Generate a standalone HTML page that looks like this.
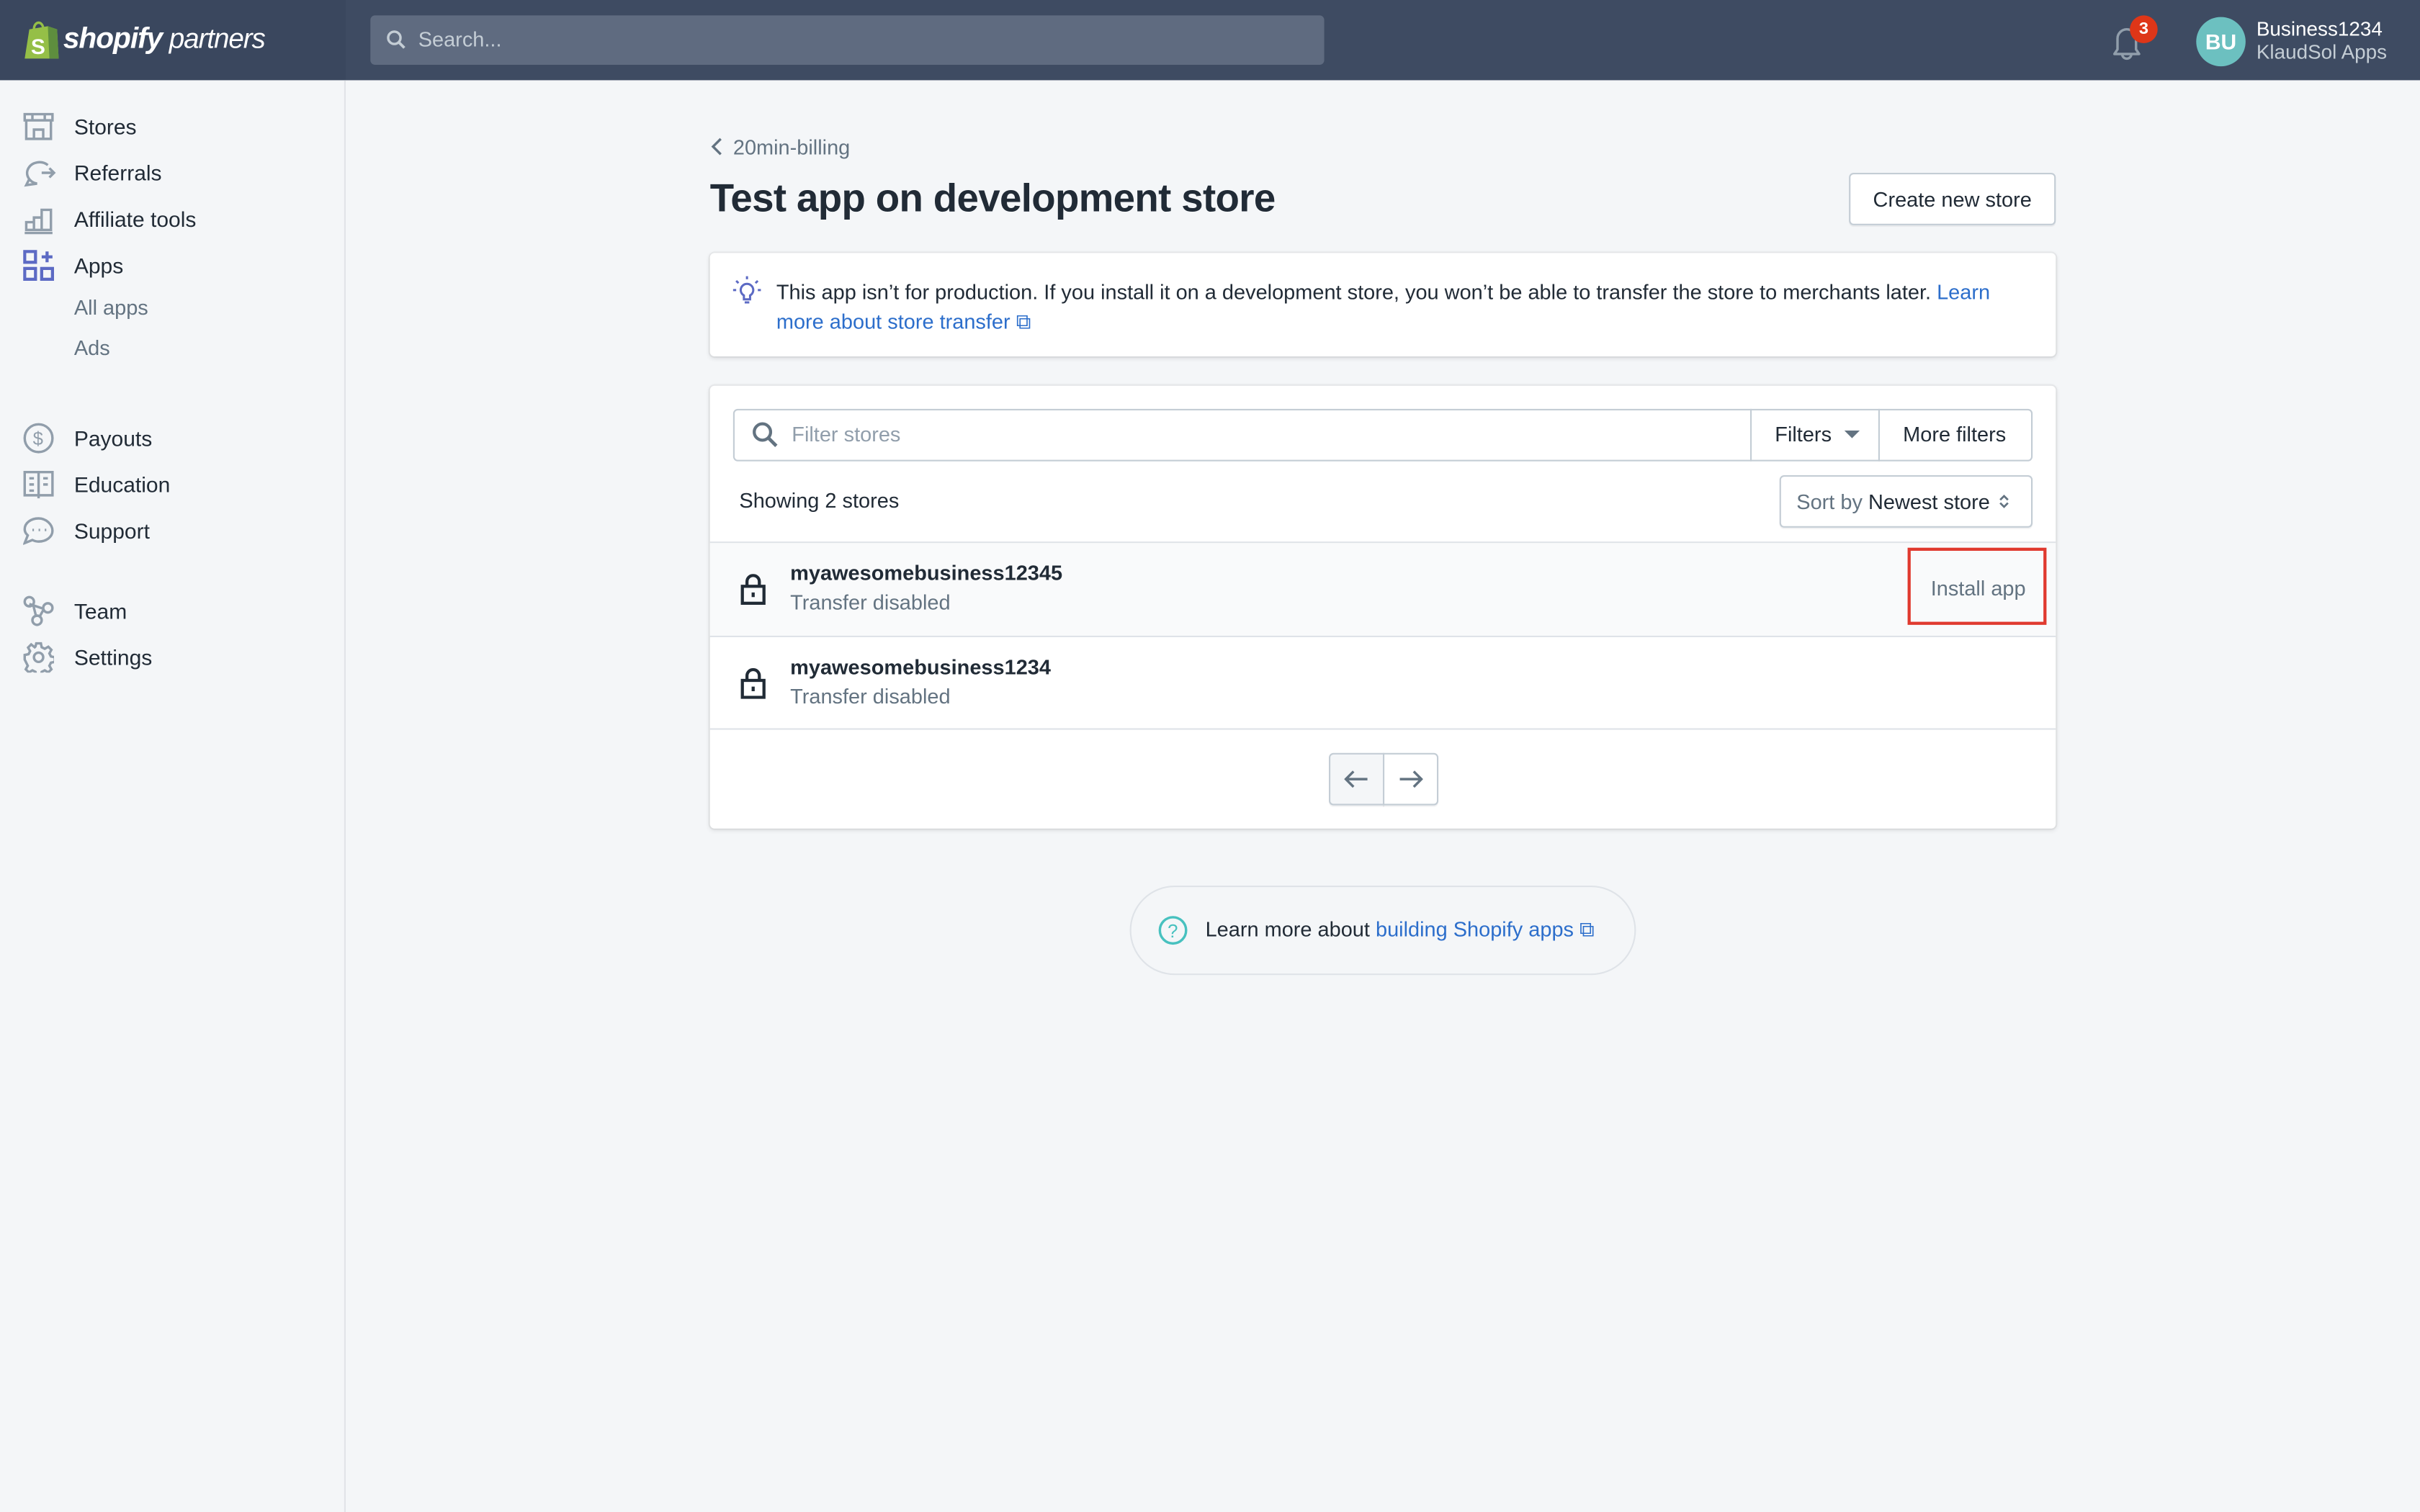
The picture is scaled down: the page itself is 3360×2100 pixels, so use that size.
<!DOCTYPE html>
<html><head><meta charset="utf-8"><style>
*{box-sizing:border-box;margin:0;padding:0}
html,body{width:3360px;height:2100px;overflow:hidden;background:#f4f6f8}
#w{width:1568px;height:980px;transform:scale(2.142857);transform-origin:0 0;position:relative;font-family:"Liberation Sans",sans-serif;color:#212b36;font-size:14px}
.top{position:absolute;left:0;top:0;width:1568px;height:52px;background:#3e4b62}
.logoarea{position:absolute;left:0;top:0;width:224px;height:52px;background:#3a475e}
.side{position:absolute;left:0;top:52px;width:224px;height:928px;background:#f4f6f8;border-right:1px solid #e1e4e8}
.nav{position:absolute;left:48px;font-size:14px;color:#212b36}
.sub{color:#637381}
.ico{position:absolute;left:15px}
.card{position:absolute;background:#fff;border-radius:3px;box-shadow:0 0 0 1px rgba(63,63,68,.06),0 1px 3px rgba(63,63,68,.15)}
.btn{position:absolute;background:#fff;border:1px solid #c4cdd5;border-radius:3px;font-size:14px;color:#212b36;display:flex;align-items:center;justify-content:center;box-shadow:0 1px 0 rgba(22,29,37,.05)}
a{color:#2c6ecb;text-decoration:none}
</style></head><body><div id="w">
<div class="top"></div>
<div class="logoarea">
<svg style="position:absolute;left:15px;top:13px" width="24" height="26" viewBox="0 0 24 26"><path d="M4 6 L16 4 L22 6 L23 25 L1 25 Z" fill="#95bf47"/><path d="M16 4 L22 6 L23 25 L17 25 Z" fill="#5e8e3e"/><path d="M7 6 C7 1 12 0 13 5" stroke="#95bf47" stroke-width="1.6" fill="none"/><text x="5" y="22" font-size="14" font-weight="bold" fill="#fff" font-family="Liberation Sans">S</text></svg>
<div style="position:absolute;left:41px;top:15px;color:#fff;font-size:19px;font-weight:bold;font-style:italic;letter-spacing:-.5px">shopify<span style="font-weight:normal;font-size:18px"> partners</span></div>
</div>
<div style="position:absolute;left:240px;top:10px;width:618px;height:32px;background:#5f6b80;border-radius:3px"></div>
<svg style="position:absolute;left:250px;top:19px" width="14" height="14" viewBox="0 0 14 14"><circle cx="5.5" cy="5.5" r="4" stroke="#c4cdd5" stroke-width="1.6" fill="none"/><path d="M8.5 8.5L12 12" stroke="#c4cdd5" stroke-width="1.8"/></svg>
<div style="position:absolute;left:271px;top:18px;color:#c4cdd5;font-size:13.5px">Search...</div>
<svg style="position:absolute;left:1364px;top:13px" width="28" height="30" viewBox="0 0 28 30"><path d="M6 22 L8 19 V12 A6 6 0 0 1 20 12 V19 L22 22 Z M11 22 A3 3 0 0 0 17 22" stroke="#919eab" stroke-width="1.6" fill="none" stroke-linejoin="round"/></svg>
<div style="position:absolute;left:1380px;top:10px;width:18px;height:18px;border-radius:50%;background:#de3618;color:#fff;font-size:11px;font-weight:bold;text-align:center;line-height:18px">3</div>
<div style="position:absolute;left:1423px;top:11px;width:32px;height:32px;border-radius:50%;background:#6cc0c0;color:#fff;font-size:14px;font-weight:bold;text-align:center;line-height:32px">BU</div>
<div style="position:absolute;left:1462px;top:11px;color:#fff;font-size:13px">Business1234</div>
<div style="position:absolute;left:1462px;top:26px;color:#c4cdd5;font-size:13px">KlaudSol Apps</div>

<div class="side"></div>
<svg class="ico" style="top:72px" width="20" height="20" viewBox="0 0 20 20" fill="none" stroke="#919eab" stroke-width="1.6"><path d="M1 2h18v4H1zM2 6v12h16V6M7 18v-6h6v6M6 2v4M14 2v4"/></svg>
<div class="nav" style="top:74px">Stores</div>
<svg class="ico" style="top:102px" width="22" height="20" viewBox="0 0 22 20" fill="none" stroke="#919eab" stroke-width="1.6"><path d="M16 5A8 7 0 1 0 9 17L2 18 4 14M12 10h8M17 7l3 3-3 3"/></svg>
<div class="nav" style="top:104px">Referrals</div>
<svg class="ico" style="top:132px" width="20" height="20" viewBox="0 0 20 20" fill="none" stroke="#919eab" stroke-width="1.6"><path d="M1 19h18M2 12h5v5H2zM7 9h5v8H7zM12 4h6v13h-6z"/></svg>
<div class="nav" style="top:134px">Affiliate tools</div>
<svg class="ico" style="top:162px" width="20" height="20" viewBox="0 0 20 20" fill="none" stroke="#5c6ac4" stroke-width="2"><rect x="1" y="1" width="7" height="7"/><rect x="1" y="12" width="7" height="7"/><rect x="12" y="12" width="7" height="7"/><path d="M15.5 1v7M12 4.5h7"/></svg>
<div class="nav" style="top:164px">Apps</div>
<div class="nav sub" style="top:192px;font-size:13.5px">All apps</div>
<div class="nav sub" style="top:218px;font-size:13.5px">Ads</div>
<svg class="ico" style="top:274px" width="20" height="20" viewBox="0 0 20 20" fill="none" stroke="#919eab" stroke-width="1.6"><circle cx="10" cy="10" r="9"/><text x="6.3" y="14.5" font-size="12" fill="#919eab" stroke="none" font-family="Liberation Sans">$</text></svg>
<div class="nav" style="top:276px">Payouts</div>
<svg class="ico" style="top:304px" width="20" height="20" viewBox="0 0 20 20" fill="none" stroke="#919eab" stroke-width="1.6"><path d="M1 2h18v15H1zM10 2v17M4 6h3M4 10h3M4 14h3M13 6h3M13 10h3"/></svg>
<div class="nav" style="top:306px">Education</div>
<svg class="ico" style="top:334px" width="20" height="20" viewBox="0 0 20 20" fill="none" stroke="#919eab" stroke-width="1.6"><path d="M10 2C5 2 1 5 1 9c0 2 1 3 2 4l-2 5 5-2c1 .5 2.5 1 4 1 5 0 9-3 9-7s-4-8-9-8z"/><path d="M6 9.5h1M10 9.5h1M14 9.5h1"/></svg>
<div class="nav" style="top:336px">Support</div>
<svg class="ico" style="top:386px" width="20" height="20" viewBox="0 0 20 20" fill="none" stroke="#919eab" stroke-width="1.6"><circle cx="4" cy="4" r="3"/><circle cx="16" cy="8" r="3"/><circle cx="9" cy="16" r="3"/><path d="M6.5 6l2 8M13 8.5l-9-3M13 9.5l-2.5 4.5"/></svg>
<div class="nav" style="top:388px">Team</div>
<svg class="ico" style="top:416px" width="20" height="20" viewBox="0 0 20 20" fill="none" stroke="#919eab" stroke-width="1.6"><circle cx="10" cy="10" r="3"/><path d="M8.5 1h3l.5 2.5 2 1 2.3-1.3 2 2-1.3 2.3 1 2 2.5.5v3l-2.5.5-1 2 1.3 2.3-2 2-2.3-1.3-2 1-.5 2.5h-3l-.5-2.5-2-1-2.3 1.3-2-2 1.3-2.3-1-2L1 11.5v-3l2.5-.5 1-2-1.3-2.3 2-2L7.5 3.5l.5-.5z"/></svg>
<div class="nav" style="top:418px">Settings</div>

<svg style="position:absolute;left:460px;top:89px" width="10" height="12" viewBox="0 0 10 12"><path d="M7 1L2 6l5 5" stroke="#637381" stroke-width="1.6" fill="none"/></svg>
<div style="position:absolute;left:475px;top:88px;color:#637381;font-size:13.5px">20min-billing</div>
<div style="position:absolute;left:460px;top:115px;font-size:25.5px;font-weight:bold;letter-spacing:-.3px;color:#212b36">Test app on development store</div>
<div class="btn" style="left:1198px;top:112px;width:134px;height:34px;font-size:13.5px">Create new store</div>

<div class="card" style="left:460px;top:164px;width:872px;height:67px"></div>
<svg style="position:absolute;left:474px;top:178px" width="20" height="20" viewBox="0 0 20 20" fill="none" stroke="#5c6ac4" stroke-width="1.4"><path d="M10 6a4 4 0 0 0-2 7.5V16h4v-2.5A4 4 0 0 0 10 6zM8.5 18h3M10 1v2M3 4l1.5 1.5M17 4l-1.5 1.5M1 10h2M17 10h2"/></svg>
<div style="position:absolute;left:503px;top:180px;width:810px;font-size:13.5px;line-height:19px">This app isn’t for production. If you install it on a development store, you won’t be able to transfer the store to merchants later. <a>Learn more about store transfer ⧉</a></div>

<div class="card" style="left:460px;top:250px;width:872px;height:287px"></div>
<div style="position:absolute;left:475px;top:265px;width:842px;height:34px;border:1px solid #c4cdd5;border-radius:3px;background:#fff"></div>
<svg style="position:absolute;left:487px;top:273px" width="18" height="18" viewBox="0 0 18 18"><circle cx="7" cy="7" r="5.3" stroke="#637381" stroke-width="2" fill="none"/><path d="M11 11l5 5" stroke="#637381" stroke-width="2.2"/></svg>
<div style="position:absolute;left:513px;top:274px;color:#919eab;font-size:13.5px">Filter stores</div>
<div style="position:absolute;left:1134px;top:265px;width:1px;height:34px;background:#c4cdd5"></div>
<div style="position:absolute;left:1150px;top:274px;font-size:13.5px">Filters</div>
<svg style="position:absolute;left:1195px;top:279px" width="10" height="6"><path d="M0 0h10L5 5z" fill="#637381"/></svg>
<div style="position:absolute;left:1217px;top:265px;width:1px;height:34px;background:#c4cdd5"></div>
<div style="position:absolute;left:1233px;top:274px;font-size:13.5px">More filters</div>
<div style="position:absolute;left:479px;top:317px;font-size:13.5px">Showing 2 stores</div>
<div class="btn" style="left:1153px;top:308px;width:164px;height:34px;justify-content:flex-start;padding-left:10px;font-size:13.5px"><span style="color:#637381">Sort by&nbsp;</span>Newest store<svg style="margin-left:6px" width="7" height="10" viewBox="0 0 7 10"><path d="M1 4l2.5-2.5L6 4M1 6l2.5 2.5L6 6" stroke="#637381" stroke-width="1.3" fill="none"/></svg></div>
<div style="position:absolute;left:460px;top:351px;width:872px;height:1px;background:#dfe3e8"></div>
<div style="position:absolute;left:460px;top:352px;width:872px;height:60px;background:#f9fafb"></div>
<div style="position:absolute;left:460px;top:412px;width:872px;height:1px;background:#dfe3e8"></div>
<div style="position:absolute;left:460px;top:472px;width:872px;height:1px;background:#dfe3e8"></div>
<svg style="position:absolute;left:479px;top:372px" width="18" height="20" viewBox="0 0 18 20" fill="none" stroke="#212b36" stroke-width="2"><rect x="2" y="8" width="14" height="11"/><path d="M5 8V5a4 4 0 0 1 8 0v3"/><path d="M9 12v3"/></svg>
<svg style="position:absolute;left:479px;top:433px" width="18" height="20" viewBox="0 0 18 20" fill="none" stroke="#212b36" stroke-width="2"><rect x="2" y="8" width="14" height="11"/><path d="M5 8V5a4 4 0 0 1 8 0v3"/><path d="M9 12v3"/></svg>
<div style="position:absolute;left:512px;top:364px;font-weight:bold;font-size:13.5px">myawesomebusiness12345</div>
<div style="position:absolute;left:512px;top:383px;color:#637381;font-size:13.5px">Transfer disabled</div>
<div style="position:absolute;left:512px;top:425px;font-weight:bold;font-size:13.5px">myawesomebusiness1234</div>
<div style="position:absolute;left:512px;top:444px;color:#637381;font-size:13.5px">Transfer disabled</div>
<div style="position:absolute;left:1236px;top:355px;width:90px;height:50px;border:2px solid #e03a2f"></div>
<div style="position:absolute;left:1251px;top:374px;color:#637381;font-size:13.5px">Install app</div>
<div class="btn" style="left:861px;top:488px;width:36px;height:34px;border-radius:3px 0 0 3px;background:#f4f6f8"><svg width="16" height="12"><path d="M15 6H2M6 1L1 6l5 5" stroke="#637381" stroke-width="1.6" fill="none"/></svg></div>
<div class="btn" style="left:896px;top:488px;width:36px;height:34px;border-radius:0 3px 3px 0"><svg width="16" height="12"><path d="M1 6h13M10 1l5 5-5 5" stroke="#637381" stroke-width="1.6" fill="none"/></svg></div>

<div style="position:absolute;left:732px;top:574px;width:328px;height:58px;border:1px solid #dfe3e8;border-radius:29px"></div>
<svg style="position:absolute;left:750px;top:593px" width="20" height="20" viewBox="0 0 20 20"><circle cx="10" cy="10" r="8.5" stroke="#47c1bf" stroke-width="1.6" fill="none"/><text x="6.5" y="14.5" font-size="12" fill="#47c1bf" font-family="Liberation Sans">?</text></svg>
<div style="position:absolute;left:781px;top:595px;font-size:13.5px">Learn more about <a>building Shopify apps ⧉</a></div>
</div></body></html>
